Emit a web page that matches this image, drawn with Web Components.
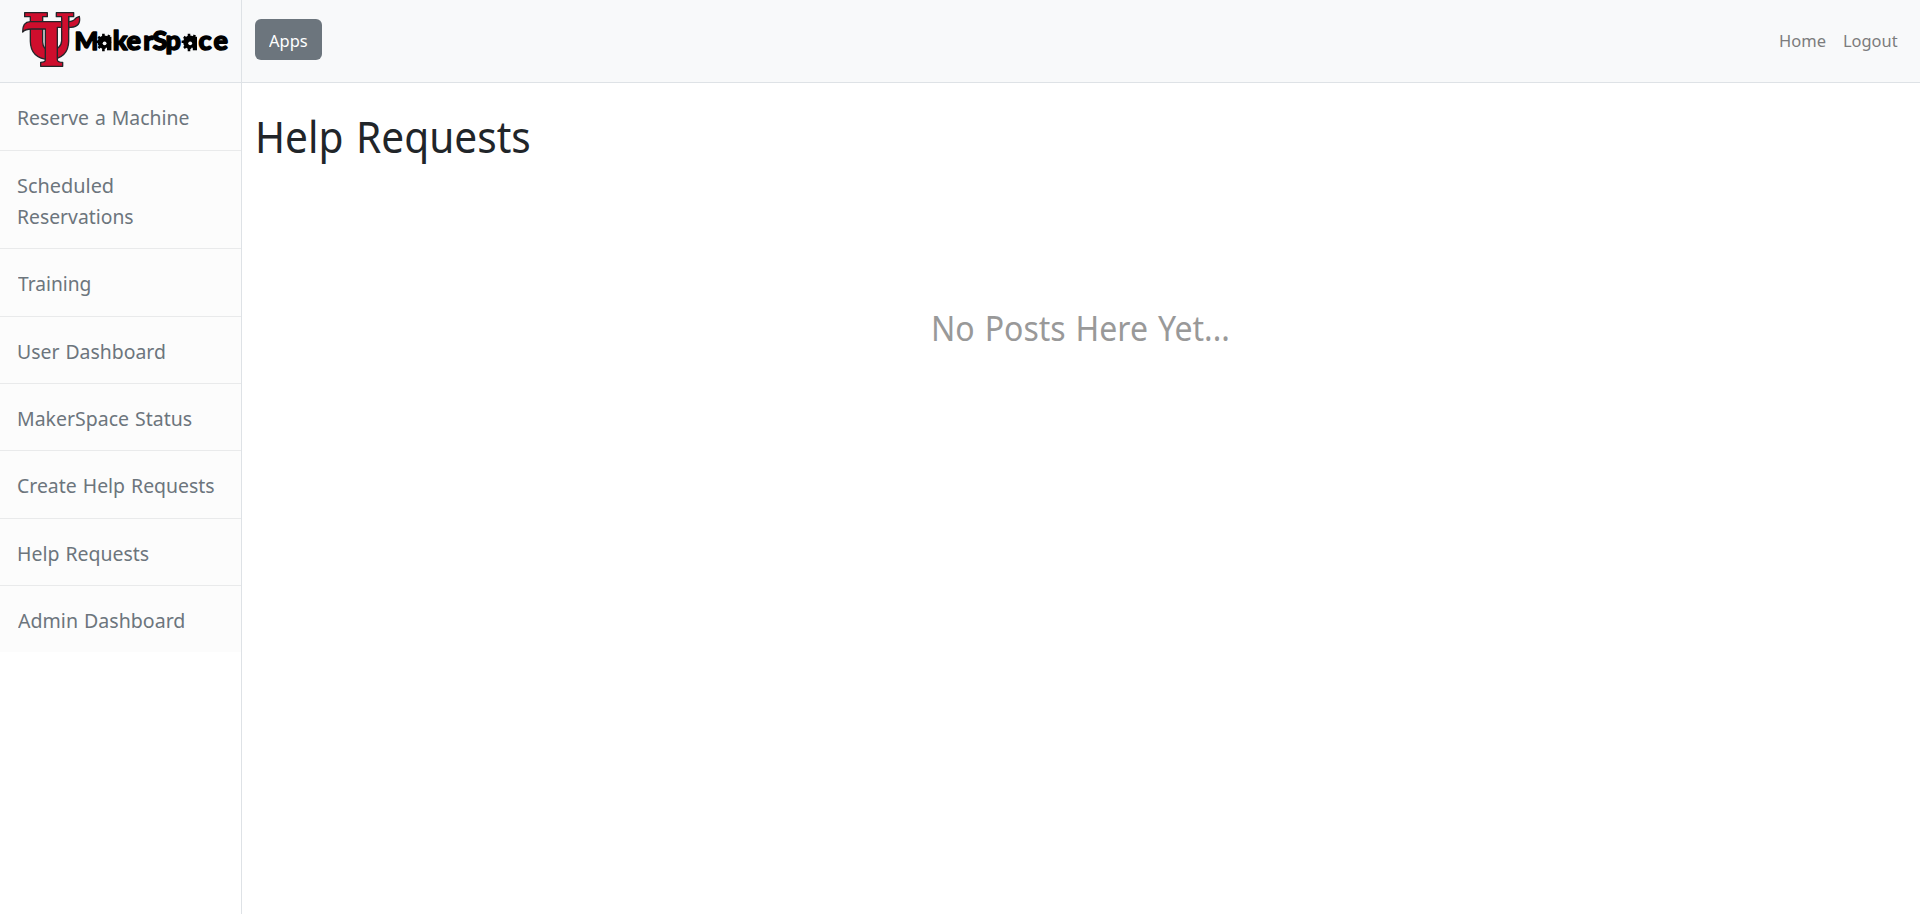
<!DOCTYPE html>
<html lang="en">
<head>
<meta charset="utf-8">
<title>MakerSpace - Help Requests</title>
<style>
html,body{margin:0;height:100%;background:#fff;overflow:hidden}
body{font-family:"Noto Sans","Open Sans",sans-serif;color:#212529}
</style>
</head>
<body>
<maker-app></maker-app>
<script>
const define = (name, html, setup) => customElements.define(name, class extends HTMLElement {
  connectedCallback() {
    if (this.shadowRoot) return;
    const t = document.createElement('template');
    t.innerHTML = html;
    this.attachShadow({mode: 'open'}).append(t.content.cloneNode(true));
    if (setup) setup(this);
  }
});

// A single-line label condensed so that its letters fill the given width.
const ctx = document.createElement('canvas').getContext('2d');
define('fit-label', `<style>
:host{display:block;white-space:nowrap}
span{display:block;width:max-content;transform-origin:0 50%}
</style><span><slot></slot></span>`, el => {
  const text = el.textContent.trim(), w = parseFloat(el.getAttribute('width'));
  const cs = getComputedStyle(el), size = parseFloat(cs.fontSize);
  ctx.font = cs.fontSize + ' ' + cs.fontFamily;
  const m = ctx.measureText(text), gap = size * .05;
  const ink = m.actualBoundingBoxRight + m.actualBoundingBoxLeft + gap * (text.split(' ').length - 1);
  const k = w / ink;
  el.style.width = w + 'px';
  const s = el.shadowRoot.querySelector('span');
  s.style.wordSpacing = gap + 'px';
  s.style.transform = `scaleX(${k.toFixed(4)})`;
  s.style.marginLeft = (m.actualBoundingBoxLeft * k).toFixed(2) + 'px';
});

define('maker-logo', `<style>
:host{display:block;width:241px;height:82px}
svg{display:block}
text{font-family:Lato,sans-serif;font-weight:900;font-size:27px;fill:#000;stroke:#000;stroke-width:1.4px;stroke-linejoin:round}
</style>
<svg width="241" height="82" viewBox="0 0 241 82">
<defs><g id="gear">
<circle r="6.8" fill="#000"/>
<path d="M-1-8.6V-5M-1 5V9M-8.4-.5H-5M-6.2-5.4L-3-3M4.8-7.4L3-3M-6 5.6L-3 3" stroke="#000" stroke-width="2.6"/>
<path d="M2.5-5.5H7V8H2.5Z" fill="#000"/>
<circle cx=".2" cy="1" r="1.9" fill="#f8f9fa"/>
<path d="M1.4 5.4H2.6V9H1Z" fill="#f8f9fa"/>
</g></defs>
<g transform="scale(.33333)" fill="#ce0e2d" stroke="#24262a" stroke-width="4" stroke-linejoin="round">
<path d="M74 38H142V50H128V126Q129 148 148 153Q184 148 185 122V50H169V38H221V50H206V124Q205 176 148 179Q92 176 91 124V50H74Z"/>
<path d="M68 96Q67 66 91 65H201Q218 65 224 58Q227 52 238 49Q244 80 213 82L204 82H172V180Q173 187 188 187V199H122V187Q136 187 136 180V87H95Q76 87 68 96Z"/>
<path d="M185 48V88H206V48"/>
<path d="M187 46H204V54H187ZM187 84H204V92H187Z" stroke="none"/>
</g>
<text y="49.8" x="74.4 97 112.8 126.4 143.2 152.6 165.4 182 198.4 213.6"><tspan font-size="25">M</tspan><tspan fill="none" stroke="none">a</tspan><tspan>kerSp</tspan><tspan fill="none" stroke="none">a</tspan><tspan>ce</tspan></text>
<use href="#gear" x="104.4" y="42.3"/><use href="#gear" x="190" y="42.3"/>
</svg>`);

define('nav-item', `<style>
:host{display:block;box-sizing:border-box;height:var(--h,67px);padding:19px 0 0 18.3px;background:#fcfcfc;border-bottom:1px solid #e9eaeb;color:#6c757d;font-size:20.2px;line-height:31px}
:host(:last-of-type){border-bottom:0}
</style><slot></slot>`);

define('side-bar', `<style>
:host{display:block;box-sizing:border-box;width:242px;border-right:1px solid #dee2e6;background:#fff}
header{height:82px;background:#f8f9fa;border-bottom:1px solid #dee2e6}
</style>
<header><maker-logo></maker-logo></header>
<nav>
<nav-item style="--h:68px"><fit-label width="171">Reserve a Machine</fit-label></nav-item>
<nav-item style="--h:98px"><fit-label width="94.7">Scheduled</fit-label><fit-label width="115">Reservations</fit-label></nav-item>
<nav-item style="--h:68px"><fit-label width="72">Training</fit-label></nav-item>
<nav-item><fit-label width="146.5">User Dashboard</fit-label></nav-item>
<nav-item><fit-label width="173.5">MakerSpace Status</fit-label></nav-item>
<nav-item style="--h:68px"><fit-label width="196">Create Help Requests</fit-label></nav-item>
<nav-item><fit-label width="130.5">Help Requests</fit-label></nav-item>
<nav-item style="--h:66px"><fit-label width="166">Admin Dashboard</fit-label></nav-item>
</nav>`);

define('top-bar', `<style>
:host{display:flex;box-sizing:border-box;height:83px;padding:19px 22.6px 0 13px;background:#f8f9fa;border-bottom:1px solid #dee2e6;font-size:17px;line-height:41px}
button{all:unset;box-sizing:border-box;width:67px;height:41px;padding:1px 0 0 14px;border-radius:6px;background:#6c757d;color:#fff}
nav{margin-left:auto;display:flex;gap:18.5px;color:#7c7c7d;padding-top:1px}
</style>
<button><fit-label width="38.5">Apps</fit-label></button>
<nav><fit-label width="45.5">Home</fit-label><fit-label width="53.5">Logout</fit-label></nav>`);

define('help-page', `<style>
:host{display:flex;flex-direction:column;padding:27px 0 0 16.6px}
h1{margin:0;font-weight:400;font-size:43px;line-height:54px}
p{margin:138px 16.6px 0 0;display:flex;justify-content:center;font-size:34.3px;line-height:52px;color:#999}
</style>
<h1><fit-label width="270.5">Help Requests</fit-label></h1>
<p><fit-label width="294">No Posts Here Yet...</fit-label></p>`);

define('maker-app', `<style>
:host{display:grid;grid-template-columns:242px 1fr;height:100vh}
</style>
<side-bar></side-bar>
<main><top-bar></top-bar><help-page></help-page></main>`);
</script>
</body>
</html>
